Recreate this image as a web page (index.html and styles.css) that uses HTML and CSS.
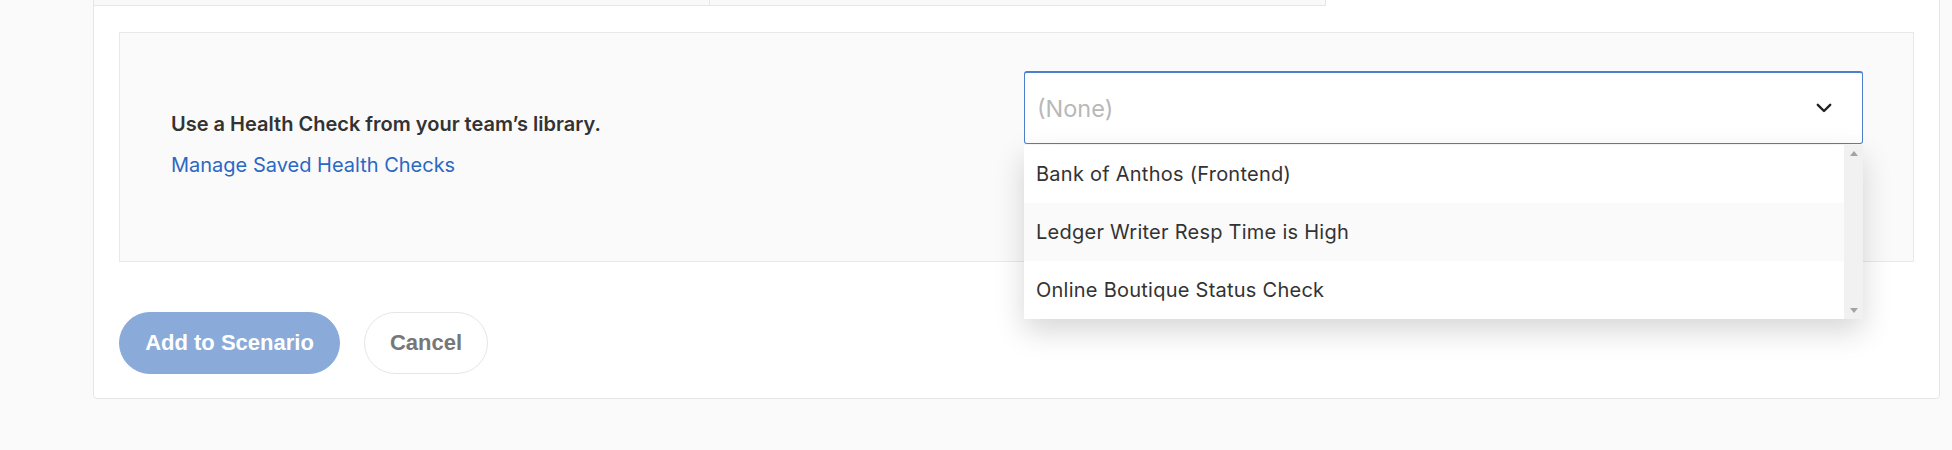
FILE: index.html
```html
<!DOCTYPE html>
<html lang="en">
<head>
<meta charset="utf-8">
<title>Health Check</title>
<link rel="stylesheet" href="styles.css">
</head>
<body>
<div class="page">
  <div class="card">
    <div class="table-frag">
      <div class="cell first"></div>
      <div class="cell"></div>
    </div>
    <div class="inner">
      <div class="left">
        <div class="label">Use a Health Check from your team’s library.</div>
        <a class="link" href="#">Manage Saved Health Checks</a>
      </div>
      <div class="right">
        <div class="select-wrap">
          <div class="select">
            <span class="placeholder">(None)</span>
            <svg class="chev" width="16" height="10" viewBox="0 0 16 10"><path d="M1.8 1.8 L8 8 L14.2 1.8" fill="none" stroke="#222" stroke-width="2.4" stroke-linecap="round" stroke-linejoin="round"/></svg>
          </div>
          <div class="menu">
            <div class="options">
              <div class="opt">Bank of Anthos (Frontend)</div>
              <div class="opt hover">Ledger Writer Resp Time is High</div>
              <div class="opt">Online Boutique Status Check</div>
            </div>
            <div class="scrollbar">
              <span class="arrow up"></span>
              <span class="arrow down"></span>
            </div>
          </div>
        </div>
      </div>
    </div>
    <div class="actions">
      <button class="btn primary">Add to Scenario</button>
      <button class="btn secondary">Cancel</button>
    </div>
  </div>
</div>
</body>
</html>
```
FILE: styles.css
```css
html, body {
  margin: 0;
  padding: 0;
}
body {
  background: #fafafa;
  width: 1952px;
  height: 450px;
  overflow: hidden;
  font-family: Inter, "Noto Sans", sans-serif;
}
.page {
  padding-left: 93px;
}
.card {
  width: 1847px;
  box-sizing: border-box;
  margin-top: -44px;
  background: #fff;
  border: 1px solid #e6e6e6;
  border-radius: 4px;
  padding: 0 25px 24px 25px;
}
.table-frag {
  margin-left: -25px;
  width: 1232px;
  height: 49px;
  box-sizing: border-box;
  display: flex;
  background: #f9f9f9;
  border-right: 1px solid #e6e6e6;
  border-bottom: 1px solid #e6e6e6;
}
.cell.first {
  width: 615px;
  border-right: 1px solid #e6e6e6;
}
.inner {
  margin-top: 26px;
  height: 230px;
  box-sizing: border-box;
  border: 1px solid #e8e8e8;
  background: #fafafa;
  display: grid;
  grid-template-columns: 1fr 839px;
  padding: 0 50px 0 51px;
}
.left {
  align-self: center;
  display: flex;
  flex-direction: column;
  align-items: flex-start;
  gap: 16px;
  padding-bottom: 5px;
}
.label {
  font-size: 20px;
  line-height: 25px;
  font-weight: 600;
  color: #333;
}
.link {
  font-size: 20px;
  line-height: 25px;
  color: #2b68c4;
  text-decoration: none;
}
.right {
  align-self: start;
  margin-top: 38px;
}
.select-wrap {
  position: relative;
}
.select {
  height: 73px;
  box-sizing: border-box;
  border: 1px solid #4d80cc;
  border-top-width: 2px;
  border-radius: 3px;
  background: #fff;
  display: flex;
  align-items: center;
  justify-content: space-between;
  padding: 0 30px 0 12px;
}
.placeholder {
  font-size: 23.5px;
  color: #b8b8b8;
}
.chev {
  display: block;
}
.menu {
  position: absolute;
  top: 100%;
  left: 0;
  width: 839px;
  margin-top: 1px;
  display: flex;
  background: #fff;
  box-shadow: 0 12px 28px rgba(0, 0, 0, 0.16);
  z-index: 5;
}
.options {
  flex: 1;
}
.opt {
  height: 58px;
  display: flex;
  align-items: center;
  padding-left: 12px;
  font-size: 20px;
  letter-spacing: 0.25px;
  color: #333;
}
.opt.hover {
  background: #fafafa;
}
.scrollbar {
  width: 19px;
  background: #f1f1f1;
  display: flex;
  flex-direction: column;
  justify-content: space-between;
  align-items: center;
  padding: 6px 0;
}
.arrow {
  width: 0;
  height: 0;
  border-left: 4px solid transparent;
  border-right: 4px solid transparent;
}
.arrow.up {
  border-bottom: 5px solid #a3a3a3;
}
.arrow.down {
  border-top: 5px solid #a3a3a3;
}
.actions {
  margin-top: 50px;
  display: flex;
  gap: 24px;
}
.btn {
  height: 62px;
  border-radius: 31px;
  font-family: "Liberation Sans", Arial, sans-serif;
  font-weight: 700;
  font-size: 22px;
  cursor: pointer;
}
.btn.primary {
  width: 221px;
  background: #8aabd9;
  color: #fff;
  border: 1px solid #8aabd9;
}
.btn.secondary {
  width: 124px;
  background: #fff;
  color: #777;
  border: 1px solid #e6e6e6;
}
```
